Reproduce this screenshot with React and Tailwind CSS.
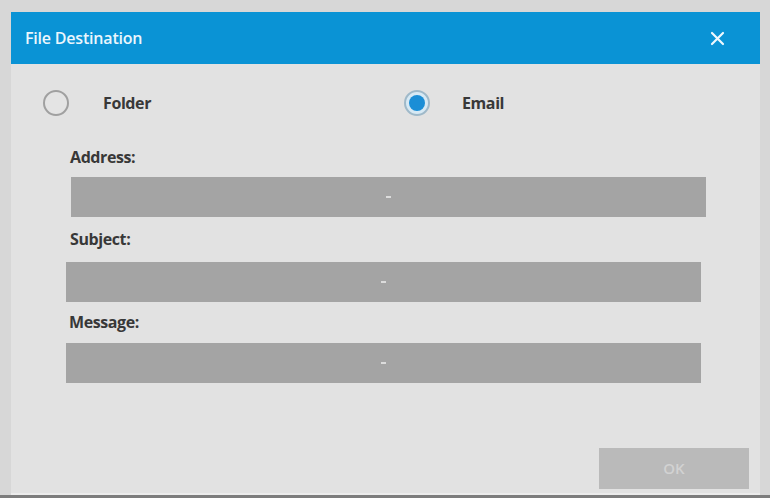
import React, { useState } from 'react';

const font = { fontFamily: '"Open Sans", "Liberation Sans", sans-serif' };

const Radio = ({ checked }) => (
  <span
    className={`flex h-[26px] w-[26px] items-center justify-center rounded-full border-2 ${
      checked ? 'border-[#9fb9c9] bg-[#d7e9f4]' : 'border-[#a0a0a0] bg-[#e4e4e4]'
    }`}
  >
    {checked && <span className="h-[16px] w-[16px] rounded-full bg-[#1b8ed6]" />}
  </span>
);

const Field = ({ className }) => (
  <div className={`flex h-[40px] items-center justify-center bg-[#a4a4a4] ${className}`}>
    <span className="h-[2px] w-[5px] bg-[#dcdcdc]" />
  </div>
);

const Label = ({ children, className }) => (
  <div className={`h-[20px] text-[16px] font-bold leading-[20px] tracking-[-0.4px] text-[#383838] ${className}`}>
    {children}
  </div>
);

const App = () => {
  const [mode, setMode] = useState('email');

  return (
    <div className="h-[498px] w-[770px] overflow-hidden border-b-[3px] border-[#7d7d7d] bg-[#d7d7d7] pl-[11px] pr-[10px] pt-[12px]" style={font}>
      <div className="flex h-[483px] flex-col border-b-2 border-[#ececec] bg-[#e2e2e2]">
        {/* title bar */}
        <div className="flex h-[52px] items-center justify-between bg-[#0a93d5] pl-[14px] pr-[35px]">
          <span className="text-[16px] font-semibold tracking-[-0.2px] text-[#eaf6fd]">File Destination</span>
          <svg width="15" height="15" viewBox="0 0 15 15" stroke="#eef8fe" strokeWidth="2.2" strokeLinecap="round">
            <path d="M2 2 L13 13 M13 2 L2 13" />
          </svg>
        </div>

        {/* destination choice */}
        <div className="mt-[26px] flex h-[26px] items-center pl-[32px]">
          <button className="flex w-[361px] items-center gap-[34px]" onClick={() => setMode('folder')}>
            <Radio checked={mode === 'folder'} />
            <span className="text-[16px] font-bold tracking-[-0.4px] text-[#383838]">Folder</span>
          </button>
          <button className="flex items-center gap-[32px]" onClick={() => setMode('email')}>
            <Radio checked={mode === 'email'} />
            <span className="text-[16px] font-bold tracking-[-0.4px] text-[#383838]">Email</span>
          </button>
        </div>

        {/* email fields */}
        <Label className="ml-[59px] mt-[31px]">Address:</Label>
        <Field className="ml-[60px] mt-[10px] h-[39px] w-[635px]" />
        <Label className="ml-[59px] mt-[12px]">Subject:</Label>
        <Field className="ml-[55px] mt-[13px] w-[635px]" />
        <Label className="ml-[58px] mt-[10px]">Message:</Label>
        <Field className="ml-[55px] mt-[11px] w-[635px]" />

        <div className="mt-auto flex justify-end pb-[4px] pr-[11px]">
          <button className="h-[41px] w-[150px] bg-[#bababa] text-[15px] font-semibold text-[#d2d2d2]">OK</button>
        </div>
      </div>
    </div>
  );
};

export default App;
